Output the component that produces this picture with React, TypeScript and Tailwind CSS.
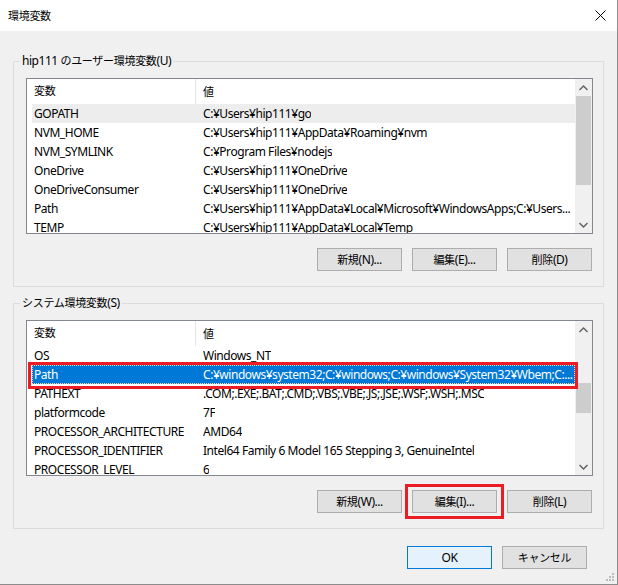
import React from "react";

const FONT = { fontFamily: '"Noto Sans", "Noto Sans CJK JP", sans-serif' };

function T({ children }: { children: string }) {
  const parts = children.split(/([\u3000-\u9fff\uff00-\uffef]+)/);
  return (
    <>
      {parts.map((p, i) =>
        i % 2 === 1 ? (
          <span key={i} className="text-[11px] tracking-[-0.3px]">
            {p}
          </span>
        ) : (
          <React.Fragment key={i}>{p}</React.Fragment>
        )
      )}
    </>
  );
}

type RowT = { name: string; value: string; sel?: boolean; hover?: boolean };

const userRows: RowT[] = [
  { name: "GOPATH", value: "C:¥Users¥hip111¥go", hover: true },
  { name: "NVM_HOME", value: "C:¥Users¥hip111¥AppData¥Roaming¥nvm" },
  { name: "NVM_SYMLINK", value: "C:¥Program Files¥nodejs" },
  { name: "OneDrive", value: "C:¥Users¥hip111¥OneDrive" },
  { name: "OneDriveConsumer", value: "C:¥Users¥hip111¥OneDrive" },
  { name: "Path", value: "C:¥Users¥hip111¥AppData¥Local¥Microsoft¥WindowsApps;C:¥Users..." },
  { name: "TEMP", value: "C:¥Users¥hip111¥AppData¥Local¥Temp" },
];

const sysRows: RowT[] = [
  { name: "OS", value: "Windows_NT" },
  { name: "Path", value: "C:¥windows¥system32;C:¥windows;C:¥windows¥System32¥Wbem;C:...", sel: true },
  { name: "PATHEXT", value: ".COM;.EXE;.BAT;.CMD;.VBS;.VBE;.JS;.JSE;.WSF;.WSH;.MSC" },
  { name: "platformcode", value: "7F" },
  { name: "PROCESSOR_ARCHITECTURE", value: "AMD64" },
  { name: "PROCESSOR_IDENTIFIER", value: "Intel64 Family 6 Model 165 Stepping 3, GenuineIntel" },
  { name: "PROCESSOR_LEVEL", value: "6" },
];

function Chevron({ up }: { up?: boolean }) {
  return (
    <svg width="9" height="6" viewBox="0 0 9 6" className="block">
      <path
        d={up ? "M0.5 5 L4.5 1 L8.5 5" : "M0.5 1 L4.5 5 L8.5 1"}
        fill="none"
        stroke="#606060"
        strokeWidth="1.4"
      />
    </svg>
  );
}

function Row({ r }: { r: RowT }) {
  return (
    <div
      className={`relative flex h-[19px] shrink-0 items-center ml-[5px] ${
        r.sel ? "bg-[#0078d7] text-white" : r.hover ? "bg-[#ededed]" : ""
      }`}
    >
      {r.sel && <div className="absolute inset-0 border border-dotted border-[#f3d69c]" />}
      <div className="w-[171px] shrink-0 pl-[2px] whitespace-nowrap overflow-hidden">{r.name}</div>
      <div className="min-w-0 whitespace-nowrap overflow-hidden text-ellipsis">{r.value}</div>
    </div>
  );
}

function ListView({ rows, thumbTop, thumbH, redRow }: { rows: RowT[]; thumbTop: number; thumbH: number; redRow?: boolean }) {
  return (
    <div className="relative flex h-[156px] w-[567px] border border-[#828790] bg-white">
      <div className="flex min-w-0 flex-1 flex-col overflow-hidden">
        <div className="flex h-[25px] shrink-0 items-center">
          <div className="flex h-full w-[169px] shrink-0 items-center border-r border-[#e5e5e5] pl-[7px]">
            <T>変数</T>
          </div>
          <div className="pl-[7px]">
            <T>値</T>
          </div>
        </div>
        {rows.map((r) => (
          <Row key={r.name} r={r} />
        ))}
      </div>
      <div className="flex w-[17px] shrink-0 flex-col bg-[#f0f0f0]">
        <div className="flex h-[17px] shrink-0 items-center justify-center">
          <Chevron up />
        </div>
        <div className="relative flex-1">
          <div className="mx-[1px] bg-[#cdcdcd]" style={{ marginTop: thumbTop, height: thumbH }} />
        </div>
        <div className="flex h-[17px] shrink-0 items-center justify-center">
          <Chevron />
        </div>
      </div>
      {redRow && (
        <div className="pointer-events-none absolute left-[1px] top-[41px] h-[27px] w-[550px] border-[3px] border-[#ec1c24]" />
      )}
    </div>
  );
}

function Btn({ children, primary }: { children: string; primary?: boolean }) {
  return (
    <div
      className={`flex h-[23px] w-[85px] items-center justify-center border ${
        primary ? "border-[#0078d7] bg-[#e5f1fb]" : "border-[#adadad] bg-[#e1e1e1]"
      }`}
    >
      <span>
        <T>{children}</T>
      </span>
    </div>
  );
}

function Group({ label, children }: { label: string; children: React.ReactNode }) {
  return (
    <div className="relative border border-[#dcdcdc] pl-[12px] pr-[11px] pt-[16px] pb-[15px]">
      <div className="absolute left-[6px] top-[-10px] bg-[#f0f0f0] px-[2px] leading-[18px]">
        <T>{label}</T>
      </div>
      {children}
    </div>
  );
}

export default function App() {
  return (
    <div
      className="relative flex h-[585px] w-[618px] flex-col overflow-hidden border-r border-b border-[#8c8c8c] bg-[#f0f0f0] text-[12px] tracking-[-0.45px] text-black"
      style={FONT}
    >
      <div className="flex h-[31px] shrink-0 items-center justify-between bg-white pl-[8px] pr-[11px]">
        <span>
          <T>環境変数</T>
        </span>
        <svg width="11" height="11" viewBox="0 0 11 11">
          <path d="M0.5 0.5 L10.5 10.5 M10.5 0.5 L0.5 10.5" stroke="#000" strokeWidth="1" />
        </svg>
      </div>
      <div className="flex flex-col px-[13px] pt-[30px]">
        <Group label="hip111 のユーザー環境変数(U)">
          <ListView rows={userRows} thumbTop={0} thumbH={89} />
          <div className="mt-[14px] flex justify-end gap-[10px]">
            <Btn>新規(N)...</Btn>
            <Btn>編集(E)...</Btn>
            <Btn>削除(D)</Btn>
          </div>
        </Group>
        <div className="mt-[16px]">
          <Group label="システム環境変数(S)">
            <ListView rows={sysRows} thumbTop={45} thumbH={30} redRow />
            <div className="mt-[14px] flex justify-end gap-[10px]">
              <Btn>新規(W)...</Btn>
              <div className="relative">
                <Btn>編集(I)...</Btn>
                <div className="pointer-events-none absolute -left-[7px] -right-[7px] -top-[6px] -bottom-[6px] border-[3px] border-[#ec1c24]" />
              </div>
              <Btn>削除(L)</Btn>
            </div>
          </Group>
        </div>
        <div className="mt-[17px] flex justify-end gap-[10px] pr-[17px]">
          <Btn primary>OK</Btn>
          <Btn>キャンセル</Btn>
        </div>
      </div>
      <svg className="absolute bottom-[2px] right-[2px]" width="10" height="10" viewBox="0 0 10 10">
        {[
          [8, 2],
          [5, 5],
          [8, 5],
          [2, 8],
          [5, 8],
          [8, 8],
        ].map(([x, y]) => (
          <rect key={`${x}-${y}`} x={x - 1} y={y - 1} width="2" height="2" fill="#bdbdbd" />
        ))}
      </svg>
    </div>
  );
}
